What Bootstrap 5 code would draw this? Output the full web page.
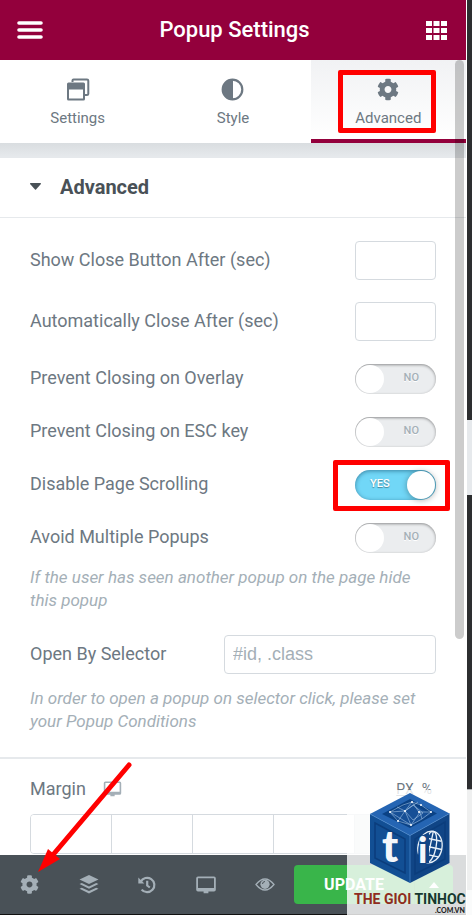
<!DOCTYPE html>
<html lang="en">
<head>
<meta charset="utf-8">
<meta name="viewport" content="width=device-width, initial-scale=1">
<title>Popup Settings</title>
<link rel="stylesheet" href="https://cdn.jsdelivr.net/npm/bootstrap@5.3.0/dist/css/bootstrap.min.css">
<style>
body { font-family: Roboto, "Liberation Sans", sans-serif; font-size: 18px; line-height: 24px; color: #6d7882; background: #fff; }
button { line-height: inherit; }
svg { display: block; }
.main-panel { min-width: 0; }
.icon-btn { border: 0; background: none; padding: 0; color: inherit; }
.top-bar { background: #93003c; height: 60px; padding: 0 19px 0 17px; }
.top-title { font-size: 22px; line-height: 28px; font-weight: 500; }
.panel-tab { border: 0; border-bottom: 4px solid transparent; background: #fff; color: #6d7882; height: 83px; padding: 18px 0 11px; font-size: 15px; line-height: 20px; }
.panel-tab.active { border-bottom-color: #93003c; background: linear-gradient(#f1f2f4, #fff) padding-box; }
.tab-gap { height: 15px; background: linear-gradient(#d9dde0, #e6e9ec 90%); }
.section-head { height: 60px; padding: 0 30px 2px; border: 0; border-bottom: 1px solid #e6e9ec; background: none; color: #495157; font-weight: 700; font-size: 20px; gap: 19px; }
.controls { padding: 23px 30px 24px; }
.control-line { min-height: 31px; }
.control-line label { padding-bottom: 2px; }
.control-line + .control-line { margin-top: 22px; }
.field-box { height: 39px; border: 1px solid #d5dadf; border-radius: 4px; background: #fff; padding: 0 8px; color: #495157; font-family: "Liberation Sans", sans-serif; }
.field-box::placeholder { color: #a4afb7; opacity: 1; }
.field-short { width: 81px; }
.field-long { width: 212px; }
.hint { margin: 13px 0 23px; font-size: 17px; line-height: 23px; font-style: italic; color: #a4afb7; }
.toggle-pill { width: 81px; height: 30px; }
.toggle-pill input { appearance: none; width: 100%; height: 100%; margin: 0; padding: 1px; border-radius: 15px; background: #ebedef; box-shadow: inset 0 1px 3px rgba(0,0,0,.4); display: block; }
.toggle-pill input::before { content: ""; display: block; width: 28px; height: 28px; border-radius: 50%; background: #fff; }
.toggle-pill input:checked { background: #71d7f7; box-shadow: inset 0 1px 4px rgba(0,50,80,.5); }
.toggle-pill input:checked::before { margin-left: 51px; box-shadow: 0 1px 6px rgba(0,0,0,.35); }
.toggle-word { position: absolute; top: 2px; right: 17px; font-size: 11px; font-weight: 500; color: #a4afb7; text-shadow: 0 1px 0 #fff; pointer-events: none; }
.toggle-word.on { right: auto; left: 15px; color: #fff; text-shadow: 0 1px 1px rgba(0,0,0,.4); }
.margin-block { border-top: 2px solid #e6e9ec; padding: 18px 30px 1px; }
.unit-btn { font-size: 14px; line-height: 18px; }
.side-cells { margin-top: 13px; height: 40px; border: 1px solid #d5dadf; border-radius: 4px; overflow: hidden; }
.side-cells input { width: 0; min-width: 0; flex: 1 1 0; padding: 0; border: 0; border-right: 1px solid #d5dadf; background: #fff; }
.side-cells button { flex: 1 1 0; padding: 0; border: 0; background: #e6e9ec; }
.foot-bar { background: #495157; height: 60px; border-bottom: 1px solid #111; color: #a4afb7; padding: 0 13px 0 20px; }
.foot-icons { width: 255px; }
.update-group { margin-left: 19px; }
.update-btn { height: 39px; background: #39b54a; color: #fff; font-size: 16px; font-weight: 700; border: 0; }
.update-main { border-radius: 4px 0 0 4px; flex: 1; }
.update-more { border-radius: 0 4px 4px 0; width: 39px; border-left: 1px solid #32a042; }
.scroll-thumb { position: absolute; top: 60px; right: 2px; width: 9px; height: 579px; border-radius: 5px; background: rgba(0,0,0,.2); }
.page-edge { width: 6px; border-left: 1px solid #fff; background: linear-gradient(#2d2e30 420px, #e6e9ec 420px 495px, #2d2e30 495px 789px, #b0b2b4 789px 890px, #e6e9ec 890px); }
.red-frame { position: absolute; border: 5px solid #f00; border-radius: 2px; pointer-events: none; }
.frame-tab { inset: 10px 30px 10px 27px; }
.frame-toggle { inset: -10px -14px -11px -22px; }
.red-arrow { position: absolute; left: 32px; bottom: 39px; pointer-events: none; }
.stamp { position: absolute; right: 0; bottom: 0; background: rgba(255,255,255,.8); }
</style>
<script src="https://cdn.jsdelivr.net/npm/bootstrap@5.3.0/dist/js/bootstrap.bundle.min.js"></script>
</head>
<body>
<svg width="0" height="0" class="position-absolute" aria-hidden="true">
  <symbol id="gear" viewBox="0 0 512 512"><path fill="currentColor" d="M487.4 315.7l-42.6-24.6c4.3-23.2 4.3-47 0-70.2l42.6-24.6c4.9-2.8 7.1-8.6 5.5-14-11.1-35.6-30-67.8-54.7-94.6-3.8-4.1-10-5.1-14.8-2.3L380.8 110c-17.9-15.4-38.5-27.3-60.8-35.1V25.8c0-5.6-3.9-10.5-9.4-11.7-36.7-8.2-74.3-7.8-109.2 0-5.5 1.2-9.4 6.1-9.4 11.7V75c-22.2 7.9-42.8 19.8-60.8 35.1L88.7 85.5c-4.9-2.8-11-1.9-14.8 2.3-24.7 26.7-43.6 58.9-54.7 94.6-1.7 5.4.6 11.2 5.5 14L67.3 221c-4.3 23.2-4.3 47 0 70.2l-42.6 24.6c-4.9 2.8-7.1 8.6-5.5 14 11.1 35.6 30 67.8 54.7 94.6 3.8 4.1 10 5.1 14.8 2.3l42.6-24.6c17.9 15.4 38.5 27.3 60.8 35.1v49.2c0 5.6 3.9 10.5 9.4 11.7 36.7 8.2 74.3 7.8 109.2 0 5.5-1.2 9.4-6.1 9.4-11.7v-49.2c22.2-7.9 42.8-19.8 60.8-35.1l42.6 24.6c4.9 2.8 11 1.9 14.8-2.3 24.7-26.7 43.6-58.9 54.7-94.6 1.5-5.5-.7-11.3-5.6-14.1zM256 336c-44.1 0-80-35.900-80-80s35.900-80 80-80 80 35.900 80 80-35.900 80-80 80z"/></symbol>
  <symbol id="screen" viewBox="0 0 20 18"><path fill="currentColor" fill-rule="evenodd" d="M2 0.5h16a1.8 1.8 0 0 1 1.8 1.8v11.4a1.8 1.8 0 0 1-1.8 1.8h-5.6v1.700H7.600v-1.700H2A1.800 1.800 0 0 1 .2 13.700V2.300A1.800 1.800 0 0 1 2 .5zM2 2.300v9.700h16V2.300z"/></symbol>
</svg>
<div class="d-flex position-relative min-vh-100">
  <main class="main-panel d-flex flex-column flex-grow-1 position-relative">
    <header class="top-bar d-flex align-items-center justify-content-between text-white">
      <button class="icon-btn" type="button" aria-label="Menu"><svg width="26" height="18" viewBox="0 0 26 18"><path d="M2 2h22M2 9h22M2 16h22" stroke="#fff" stroke-width="3.600" stroke-linecap="round"/></svg></button>
      <h1 class="top-title m-0">Popup Settings</h1>
      <button class="icon-btn" type="button" aria-label="Widgets"><svg width="21" height="19" viewBox="0 0 21 19"><path fill="#fff" d="M0 0h6v5H0zM7.500 0h6v5h-6zM15 0h6v5h-6zM0 7h6v5H0zM7.500 7h6v5h-6zM15 7h6v5h-6zM0 14h6v5H0zM7.500 14h6v5h-6zM15 14h6v5h-6z"/></svg></button>
    </header>
    <nav class="row g-0">
      <div class="col"><button type="button" class="panel-tab w-100 d-flex flex-column align-items-center justify-content-between"><svg width="24" height="23" viewBox="0 0 24 23"><path d="M6.500 4V2.500a1 1 0 0 1 1-1H21a1.300 1.300 0 0 1 1.300 1.300v13a1.300 1.300 0 0 1-1.300 1.200h-2" fill="none" stroke="currentColor" stroke-width="2"/><path fill="currentColor" fill-rule="evenodd" d="M2.500 4.500h15A1.500 1.500 0 0 1 19 6v15a1.500 1.500 0 0 1-1.500 1.500h-15A1.500 1.500 0 0 1 1 21V6a1.500 1.500 0 0 1 1.500-1.500zM3 11.500v9h14v-9z"/></svg>Settings</button></div>
      <div class="col"><button type="button" class="panel-tab w-100 d-flex flex-column align-items-center justify-content-between"><svg width="23" height="23" viewBox="0 0 23 23"><circle cx="11.500" cy="11.500" r="9.800" fill="none" stroke="currentColor" stroke-width="2.200"/><path fill="currentColor" d="M12 1a10.500 10.500 0 0 0 0 21z"/></svg>Style</button></div>
      <div class="col position-relative"><button type="button" class="panel-tab active w-100 d-flex flex-column align-items-center justify-content-between"><svg width="22" height="23"><use href="#gear"/></svg>Advanced</button><div class="red-frame frame-tab"></div></div>
    </nav>
    <div class="tab-gap"></div>
    <button class="section-head d-flex align-items-center w-100 text-start" type="button"><svg width="11" height="7" viewBox="0 0 11 7"><path fill="currentColor" d="M.5 0h10q.8.500.2 1.200L6 6.500q-.5.500-1 0L.3 1.200Q-.3.500.5 0z"/></svg>Advanced</button>
    <section class="controls">
      <div class="control-line d-flex align-items-center justify-content-between"><label for="show">Show Close Button After (sec)</label><input id="show" class="field-box field-short" type="text"></div>
      <div class="control-line d-flex align-items-center justify-content-between"><label for="auto">Automatically Close After (sec)</label><input id="auto" class="field-box field-short" type="text"></div>
      <div class="control-line d-flex align-items-center justify-content-between"><label for="overlay">Prevent Closing on Overlay</label><div class="toggle-pill position-relative"><input id="overlay" type="checkbox"><span class="toggle-word">NO</span></div></div>
      <div class="control-line d-flex align-items-center justify-content-between"><label for="esc">Prevent Closing on ESC key</label><div class="toggle-pill position-relative"><input id="esc" type="checkbox"><span class="toggle-word">NO</span></div></div>
      <div class="control-line d-flex align-items-center justify-content-between"><label for="scrolling">Disable Page Scrolling</label><div class="toggle-pill position-relative"><input id="scrolling" type="checkbox" checked><span class="toggle-word on">YES</span><div class="red-frame frame-toggle"></div></div></div>
      <div class="control-line d-flex align-items-center justify-content-between"><label for="multiple">Avoid Multiple Popups</label><div class="toggle-pill position-relative"><input id="multiple" type="checkbox"><span class="toggle-word">NO</span></div></div>
      <p class="hint">If the user has seen another popup on the page hide this popup</p>
      <div class="control-line d-flex align-items-center justify-content-between"><label for="selector">Open By Selector</label><input id="selector" class="field-box field-long" type="text" placeholder="#id, .class"></div>
      <p class="hint mb-0">In order to open a popup on selector click, please set your Popup Conditions</p>
    </section>
    <section class="margin-block">
      <div class="d-flex align-items-center">
        <label for="m-top">Margin</label>
        <button class="icon-btn ms-3" type="button" aria-label="Device"><svg width="21" height="16" color="#a4afb7"><use href="#screen"/></svg></button>
        <div class="d-flex ms-auto gap-2 pe-1"><button class="icon-btn unit-btn text-decoration-underline" type="button">PX</button><button class="icon-btn unit-btn" type="button">%</button></div>
      </div>
      <div class="side-cells d-flex"><input id="m-top" type="text" aria-label="Top"><input type="text" aria-label="Right"><input type="text" aria-label="Bottom"><input type="text" aria-label="Left"><button type="button" aria-label="Link values"></button></div>
    </section>
    <footer class="foot-bar d-flex align-items-center justify-content-between mt-auto">
      <div class="foot-icons d-flex align-items-center justify-content-between">
        <button class="icon-btn" type="button" aria-label="Settings"><svg width="19" height="19"><use href="#gear"/></svg></button>
        <button class="icon-btn" type="button" aria-label="Navigator"><svg width="20" height="19" viewBox="0 0 20 19"><path fill="currentColor" d="M10 0l9.500 4.500L10 9 .5 4.500zM2.800 8L10 11.400 17.200 8l2.300 1.100L10 13.700.5 9.100zM2.800 12.700L10 16.100l7.200-3.400 2.300 1.100L10 18.400.5 13.800z"/></svg></button>
        <button class="icon-btn" type="button" aria-label="History"><svg width="18" height="18" viewBox="0 0 18 18" fill="none" stroke="currentColor" stroke-width="2.200"><path d="M2.700 5.800a7.200 7.200 0 1 1 .9 7.800M9.200 4.800v4.700l2.600 2"/><path d="M.3 1.500v6h6z" fill="currentColor" stroke="none"/></svg></button>
        <button class="icon-btn" type="button" aria-label="Responsive mode"><svg width="20" height="18"><use href="#screen"/></svg></button>
        <button class="icon-btn" type="button" aria-label="Preview"><svg width="20" height="13" viewBox="0 0 20 13"><path d="M1 6.500Q10-4.500 19 6.500 10 17.500 1 6.500z" fill="none" stroke="currentColor" stroke-width="1.300"/><circle cx="10" cy="6.300" r="4.600" fill="currentColor"/><path d="M7.500 6A2.600 2.600 0 0 1 10 3.500" fill="none" stroke="#495157"/></svg></button>
      </div>
      <div class="update-group d-flex flex-grow-1"><button class="update-btn update-main" type="button">UPDATE</button><button class="update-btn update-more d-flex align-items-center justify-content-center" type="button" aria-label="Save options"><svg width="10" height="6" viewBox="0 0 10 6"><path fill="#fff" d="M0 6l5-6 5 6z"/></svg></button></div>
    </footer>
    <div class="scroll-thumb"></div>
    <svg class="red-arrow" width="104" height="120" viewBox="0 0 104 120"><path d="M97 9L20 100" stroke="#f00" stroke-width="5" stroke-linecap="round"/><path fill="#f00" d="M6 116l10-23 12 10z"/></svg>
  </main>
  <div class="page-edge flex-shrink-0"></div>
  <div class="stamp">
    <svg width="125" height="125" viewBox="0 0 125 125" role="img" aria-label="The Gioi Tin Hoc">
      <path fill="#2565b3" d="M63 3l39.500 20.500L63 45.500 23 24z"/>
      <path fill="#124f94" d="M23 24l40 21.500V93L23 73z"/>
      <path fill="#104586" d="M102.500 23.500v49.500L63 93V45.500z"/>
      <path fill="#0b4285" d="M63 9l27 14.500L63 38 35 24z"/>
      <path fill="#164f96" d="M63 13l21 11-21 12-21-12z"/>
      <path fill="none" stroke="#0b3d7c" stroke-width="1.500" d="M28 33l30 16v34L28 68zM98 32v37L68 84V49z"/>
      <path fill="none" stroke="#4a8ad0" stroke-width=".7" d="M23 24l40 21.500L102.500 23.500M63 45.500V93"/>
      <g fill="none" stroke="#b8d5ef" stroke-width=".5"><path d="M43 22l13-7 9-3 9 3 10 7-9 7-11 6-13-4-8-9 15-1 8-6 10 8-10 7-8-9 13-9M50 17l8 4 7-9 7 10 12 0M51 31l7-10 6 14 9-13 2 7M43 22l21 13"/></g>
      <g fill="#fff"><circle cx="43" cy="22" r="1"/><circle cx="58" cy="21" r="1"/><circle cx="65" cy="12" r="1"/><circle cx="72" cy="22" r="1"/><circle cx="64" cy="35" r="1"/><circle cx="51" cy="31" r="1"/><circle cx="84" cy="22" r="1"/><circle cx="74" cy="15" r="1"/></g>
      <text x="35" y="72" font-family="Lato, sans-serif" font-weight="900" font-size="43" fill="#f4f7fb">t</text>
      <g fill="none" stroke="#e8f0f8" stroke-width="1.300" transform="rotate(12 83 57)"><ellipse cx="83" cy="57" rx="12" ry="16"/><ellipse cx="83" cy="57" rx="6" ry="16"/><path d="M83 41v32M71 57h24M73 49h20M73 65h20"/></g>
      <path fill="#104586" d="M73 46l9-3v30l-12 2z"/>
      <text x="71" y="73" font-family="Lato, sans-serif" font-weight="900" font-size="36" fill="#f4f7fb">i</text>
      <text x="7" y="114" font-family="Roboto, sans-serif" font-weight="700" font-size="14" fill="#8f2c20">THE GIOI <tspan fill="#16382f">TINHOC</tspan></text>
      <text x="88" y="123" font-family="Lato, sans-serif" font-weight="900" font-size="7" fill="#222">.COM.VN</text>
    </svg>
  </div>
</div>
</body>
</html>
